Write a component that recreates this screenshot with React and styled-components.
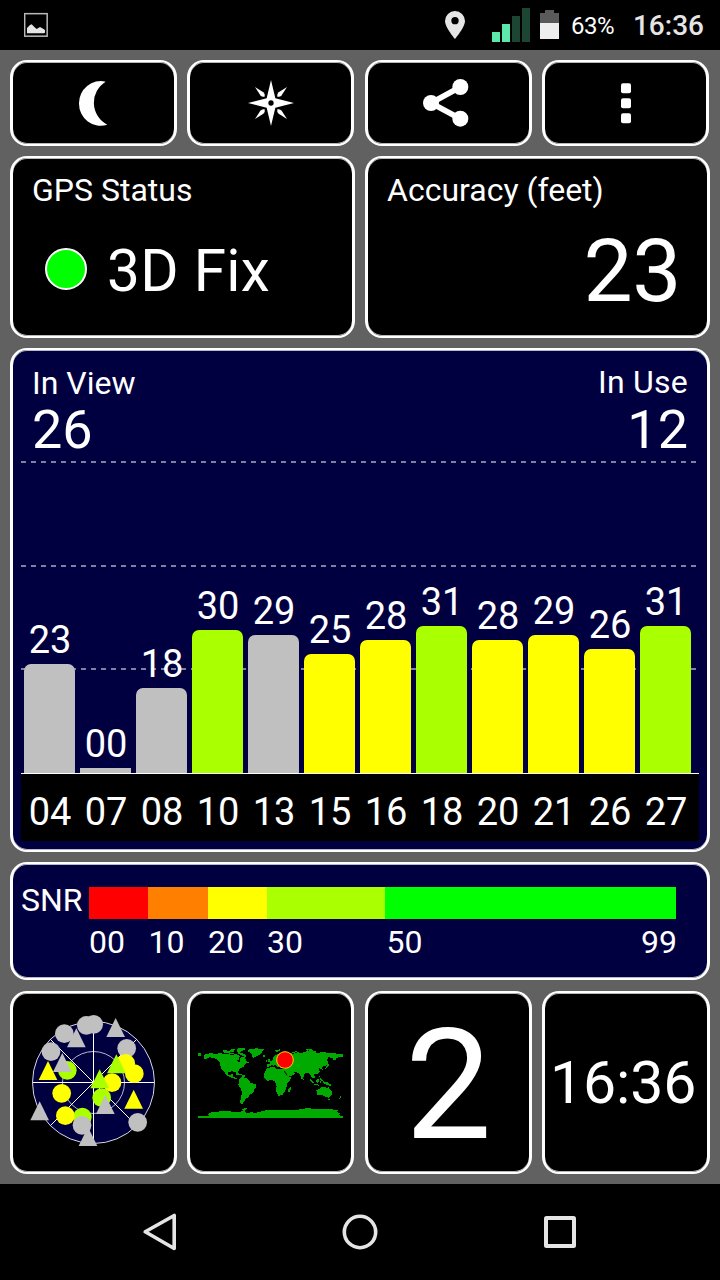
import React from 'react'
import styled, { createGlobalStyle } from 'styled-components'

const GlobalStyle = createGlobalStyle`
    * {
        box-sizing: border-box;
    }
    body {
        margin: 0;
        background-color: #000;
        color: #fff;
        font-family: Roboto, "Liberation Sans", sans-serif;
    }
    svg {
        display: block;
        flex-shrink: 0;
    }
`
const Screen = styled.div`
    width: 720px;
    height: 1280px;
    display: flex;
    flex-direction: column;
    overflow: hidden;
    background-color: #000;
`
const StatusBar = styled.header`
    height: 50px;
    display: flex;
    align-items: center;
    padding: 0 16px 0 24px;
`
const Battery = styled.span`
    width: 44px;
    margin: 2px 18px 0 12px;
    font-size: 24px;
    line-height: 30px;
    letter-spacing: -0.5px;
`
const StatusTime = styled.span`
    margin-top: 2px;
    font-size: 28px;
    font-weight: 500;
    line-height: 34px;
    color: #e5e5e5;
`
const Spacer = styled.div`
    flex: 1;
`
const Content = styled.main`
    height: 1134px;
    display: flex;
    flex-direction: column;
    gap: 10px;
    padding: 10px 10px 0;
    background-color: #616161;
`
const Panel = styled.section`
    border: solid #fff;
    border-width: 2px 3px;
    border-radius: 17px;
    box-shadow: inset 0 1px 0 rgba(255, 255, 255, 0.72), inset 0 -1px 0 rgba(255, 255, 255, 0.72);
    background-color: ${(prop) => prop.navy ? '#000040' : '#000'};
`
const Row = styled.div`
    display: grid;
    grid-template-columns: ${(prop) => prop.half ? '345px 345px' : '167px 168px 167px 168px'};
    column-gap: 10px;
    height: ${(prop) => prop.height}px;
    margin-top: ${(prop) => prop.top || 0}px;
    & > ${Panel}:nth-child(2) {
        margin-right: ${(prop) => prop.half ? 0 : 1}px;
    }
`
const IconButton = styled(Panel).attrs({ as: 'button' })`
    width: 167px;
    display: flex;
    align-items: center;
    justify-content: center;
    padding: 0;
`
const InfoPanel = styled(Panel)`
    padding: 13px 27px 0 19px;
`
const Label = styled.div`
    font-size: 32px;
    line-height: 38px;
`
const FixRow = styled.div`
    display: flex;
    align-items: center;
    margin: 28px 0 0 13px;
    font-size: 58.5px;
    line-height: 68px;
    letter-spacing: 0.3px;
`
const FixDot = styled.div`
    width: 42px;
    height: 42px;
    margin: 0 20px 4px 0;
    border: 2px solid #fff;
    border-radius: 50%;
    background-color: #00ff00;
`
const Accuracy = styled.div`
    margin: 12px -1px 0 0;
    font-size: 87.5px;
    line-height: 100px;
    letter-spacing: -0.4px;
    text-align: right;
`
const ChartPanel = styled(Panel)`
    height: 504px;
    padding: 0 8px;
`
const ChartHeader = styled.div`
    height: 111px;
    display: flex;
    justify-content: space-between;
    padding: 16px 11px 0 11px;
`
const Counter = styled.div`
    text-align: ${(prop) => prop.right ? 'right' : 'left'};
`
const CounterName = styled.div`
    margin-top: ${(prop) => prop.up ? -1 : 0}px;
    margin-bottom: ${(prop) => prop.up ? 1 : 0}px;
    font-size: 32px;
    line-height: 34px;
    letter-spacing: ${(prop) => prop.up ? 0.25 : 0}px;
`
const CounterValue = styled.div`
    font-size: 54px;
    line-height: 60px;
`
const Plot = styled.div`
    position: relative;
    height: 312px;
    display: flex;
    align-items: flex-end;
    gap: 5px;
    padding-left: 3px;
`
const GridLine = styled.div`
    position: absolute;
    left: 0;
    top: ${(prop) => prop.top}px;
    width: 675px;
    height: 2px;
    background: repeating-linear-gradient(90deg, #8080a0 0 5px, transparent 5px 10px);
`
const Column = styled.div`
    position: relative;
    width: 51px;
    text-align: center;
`
const BarValue = styled.div`
    margin: 0 -6px 4px -5px;
    font-size: 38px;
    line-height: 40px;
`
const Bar = styled.div`
    border-radius: ${(prop) => prop.empty ? 0 : '7px 7px 0 0'};
    background-color: ${(prop) => prop.color};
`
const Axis = styled.div`
    width: 678px;
    height: 68px;
    display: flex;
    gap: 5px;
    padding: 9px 0 0 3.5px;
    border-top: 1px solid #fff;
    background-color: #000;
`
const AxisLabel = styled.div`
    width: 51px;
    font-size: 38px;
    line-height: 58px;
    text-align: center;
`
const SnrPanel = styled(Panel)`
    height: 118px;
    display: flex;
    padding: 23px 0 0 8px;
`
const SnrName = styled.div`
    width: 68px;
    margin-top: -6px;
    font-size: 32px;
    line-height: 38px;
`
const Scale = styled.div`
    width: 587px;
    display: grid;
    grid-template-columns: 59.4px 59.6px 59px 118px 291px;
    grid-template-rows: 32px 44px;
`
const Segment = styled.div`
    background-color: ${(prop) => prop.color};
`
const Tick = styled.div`
    display: flex;
    justify-content: space-between;
    margin-right: -1px;
    padding: 4px 0 0 ${(prop) => prop.indent || 0}px;
    font-size: 32px;
    line-height: 38px;
`
const Tile = styled(Panel)`
    display: flex;
    align-items: center;
    justify-content: center;
    overflow: hidden;
`
const BigDigit = styled.div`
    margin-top: 6px;
    font-size: 154.5px;
    line-height: 180px;
`
const Clock = styled.div`
    width: 144px;
    margin-right: 8px;
    overflow: hidden;
    font-size: 59px;
    line-height: 70px;
    letter-spacing: -0.1px;
    white-space: nowrap;
`
const NavBar = styled.nav`
    height: 96px;
    display: grid;
    grid-template-columns: repeat(3, 200px);
    justify-content: center;
    align-items: center;
    justify-items: center;
`

const LIME = '#aaff00'
const YELLOW = '#ffff00'
const GREY = '#c0c0c0'

const satellites = [
    { id: '04', snr: '23', height: 109, color: GREY },
    { id: '07', snr: '00', height: 5, color: GREY },
    { id: '08', snr: '18', height: 85, color: GREY },
    { id: '10', snr: '30', height: 143, color: LIME },
    { id: '13', snr: '29', height: 138, color: GREY },
    { id: '15', snr: '25', height: 119, color: YELLOW },
    { id: '16', snr: '28', height: 133, color: YELLOW },
    { id: '18', snr: '31', height: 147, color: LIME },
    { id: '20', snr: '28', height: 133, color: YELLOW },
    { id: '21', snr: '29', height: 138, color: YELLOW },
    { id: '26', snr: '26', height: 124, color: YELLOW },
    { id: '27', snr: '31', height: 147, color: LIME },
]

// c = circle, t = triangle, drawn in this order
const sky = [
    ['c', 259, 121, GREY],
    ['c', 281, 118, GREY],
    ['c', 193, 146, GREY],
    ['t', 229, 160, GREY],
    ['c', 153, 200, GREY],
    ['t', 347, 129, GREY],
    ['c', 380, 190, GREY],
    ['c', 202, 256, LIME],
    ['t', 187, 234, GREY],
    ['t', 144, 258, YELLOW],
    ['c', 377, 235, YELLOW],
    ['t', 349, 238, LIME],
    ['c', 403, 266, YELLOW],
    ['c', 305, 338, LIME],
    ['c', 336, 293, YELLOW],
    ['t', 299, 283, LIME],
    ['t', 316, 360, GREY],
    ['t', 401, 344, YELLOW],
    ['c', 185, 325, YELLOW],
    ['t', 119, 379, GREY],
    ['c', 247, 396, LIME],
    ['c', 196, 392, YELLOW],
    ['t', 264, 456, GREY],
    ['c', 246, 421, GREY],
    ['c', 413, 412, GREY],
]

const PictureIcon = () => (
    <svg width="24" height="50" viewBox="72 0 72 150">
        <rect x="74" y="41" width="67.500" height="67.500" fill="none" stroke="#b8bab6" strokeWidth="4.500" />
        <path d="M81 100V84L90 75L95 73L103 81L110 87L120 81L132 88L135 91V98L131 100Z" fill="#e5e5e5" />
    </svg>
)

const PinIcon = () => (
    <svg width="20" height="50" viewBox="255 0 60 150">
        <path
            d="M285 33A30 30 0 0 0 255 63C255 82 285 117 285 117S315 82 315 63A30 30 0 0 0 285 33ZM285 73A11 11 0 1 1 285 51A11 11 0 1 1 285 73Z"
            fill="#e5e5e5"
        />
    </svg>
)

const Signal = styled.svg`
    margin: 0 10px 0 27px;
`

const SignalIcon = () => (
    <Signal width="38" height="50" viewBox="0 0 38 50">
        <path d="M0 32H8V42H0ZM10 24H18V42H10Z" fill="#5ce8ab" />
        <path d="M20 16H28V42H20ZM30 8H38V42H30Z" fill="#1c4533" />
    </Signal>
)

const BatteryIcon = () => (
    <svg width="19" height="50" viewBox="0 0 19 50">
        <path d="M0 13H5V10H14V13H19V23H0Z" fill="#5a5a5a" />
        <path d="M0 23H19V39H0Z" fill="#eee" />
    </svg>
)

const MoonIcon = () => (
    <svg width="51" height="50" viewBox="204 234 153 150">
        <path d="M317 245A65 66 0 0 0 237 310A65 66 0 0 0 322 374A74 74 0 0 1 317 245Z" fill="#fff" />
    </svg>
)

const CompassIcon = () => (
    <svg width="51" height="50" viewBox="-78 -75 153 150">
        <path d="M0 -69L13 -14L69 0L13 14L0 69L-13 14L-69 0L-13 -14Z" fill="#fff" />
        {[0, 90, 180, 270].map((angle) => (
            <path
                key={angle}
                d="M-48 -48L-23 -32Q-17 -27 -19 -19Q-27 -17 -32 -23Z"
                transform={`rotate(${angle})`}
                fill="#fff"
            />
        ))}
        <circle r="8" fill="#000" />
    </svg>
)

const ShareIcon = () => (
    <svg width="51" height="50" viewBox="189 234 153 150" overflow="visible">
        <path d="M301 261L213 309L301 356" fill="none" stroke="#fff" strokeWidth="17" />
        <circle cx="213" cy="309" r="24" fill="#fff" />
        <circle cx="301" cy="261" r="24" fill="#fff" />
        <circle cx="301" cy="356" r="24" fill="#fff" />
    </svg>
)

const MenuIcon = () => (
    <svg width="51" height="50" viewBox="720 234 153 150">
        <rect x="783" y="250" width="30" height="30" rx="6" fill="#fff" />
        <rect x="783" y="295" width="30" height="30" rx="6" fill="#fff" />
        <rect x="783" y="340" width="30" height="30" rx="6" fill="#fff" />
    </svg>
)

const SkyPlot = () => (
    <svg width="151" height="151" viewBox="54 66 453 453" overflow="visible">
        <circle cx="280.500" cy="292.500" r="183" fill="#000040" stroke="#d8d8e4" strokeWidth="3" />
        <circle cx="280.500" cy="292.500" r="93" fill="none" stroke="#b8b8cc" strokeWidth="3" />
        <path
            d="M280.500 110V475M98 292.500H463M151 163L410 422M410 163L151 422"
            fill="none"
            stroke="#fff"
            strokeWidth="3"
        />
        {sky.map(([shape, x, y, color], i) => (
            shape === 'c'
                ? <circle key={i} cx={x} cy={y} r="28" fill={color} />
                : <path key={i} d={`M${x} ${y - 30}L${x + 28} ${y + 27}H${x - 28}Z`} fill={color} />
        ))}
    </svg>
)

const WorldMap = () => (
    <svg width="145" height="70" viewBox="39 54 435 210" overflow="visible">
        <g fill="#00aa00" shapeRendering="crispEdges">
            {/* north america and the arctic islands */}
            <path d="M39 69H48V78H39ZM57 85L56 80L62 71L80 70L108 73L130 71L140 75L154 72L164 78L163 88L154 90L162 98L166 94V86L172 80L180 82L184 92L192 98L180 102L176 110L166 114L162 120L158 125V134L154 134L151 126L140 124L130 126L128 133L136 137L140 131L144 132L143 139L152 143L158 148L150 147L136 141L124 135L116 124L108 116L106 104L104 96L96 88L84 83L74 82L62 88Z" />
            <path d="M112 62L124 60L130 66L120 70ZM134 59L150 57L146 66L136 66ZM132 68H146V72H134ZM154 56L176 54L184 57L170 64L158 66ZM158 67L172 68L182 76L186 82L180 82L170 76L160 72ZM126 64H134V68H126ZM100 70H112V73H100Z" />
            <path d="M188 64L194 58L212 55L238 57L232 64L230 70L224 75L214 78L206 84L201 80L200 72L194 66Z" />
            <path d="M234 75H241V80H234ZM150 128L162 130L172 134V137L160 134ZM172 136H180V140H172Z" />
            {/* south america */}
            <path d="M162 150L170 141L184 144L194 152L196 158L214 164L214 170L207 178L205 188L195 194L190 202L182 207L177 215L174 220L178 222L170 222L165 217L168 204L171 186L167 176L160 165Z" />
            {/* africa */}
            <path d="M248 114L268 110L274 116L290 116L300 118L305 130L312 140L320 141L315 151L306 160L304 174L299 186L292 195L280 198L275 188L272 178L275 168L270 154L262 150L248 152L240 146L236 137L240 124Z" />
            <path d="M312 174L319 169L316 184L310 187L309 179Z" />
            {/* europe and asia */}
            <path d="M246 110L246 102L256 101L253 96L262 92L266 88L264 82L274 74L284 69L296 67L326 71L340 66L342 70L352 68L360 66L364 63L378 60L392 64L394 68L420 67L444 70L474 72V80L460 81L454 85L450 92L444 90L446 84L430 82L426 92L430 98L420 109L410 110L414 119L408 118L402 114L404 126L396 132L386 134L390 142L384 146L378 140L376 134L370 130L366 128L358 132L354 146L349 147L345 134L338 128L326 124L330 130L324 136L312 140L300 124V115L286 113L284 107L280 112L270 104L266 103L270 110L260 104L256 109Z" />
            <path d="M249 86H254V96L248 98ZM244 91H247V95H244ZM270 61L284 58L286 62L276 66ZM320 67L334 63L336 66L324 70ZM364 58L380 56V60L366 62ZM428 100L433 104L426 114L420 118L424 110ZM402 136L408 146L414 153L408 152L404 144ZM353 146H356V150H353Z" />
            {/* indonesia and oceania */}
            <path d="M372 146L380 150L388 160L384 160L376 152ZM388 162L402 164V167L388 165ZM392 150L402 145L400 158L393 157ZM404 152H409V160H404ZM414 154L428 157L438 164L438 168L424 164L414 158Z" />
            <path d="M394 180L406 175L412 170L422 172L426 176L430 169L434 178L441 186L440 195L432 203L420 200L412 194L398 197ZM428 206H434V210H428ZM466 198L470 202L462 209L458 212L464 204Z" />
            {/* antarctica */}
            <path d="M39 264V257H72L68 252L78 248V245L130 244L164 246L174 242L172 238L184 232L186 235L178 242L182 248L196 250V247L214 248L236 242L270 239L330 240L346 238L370 234L388 238L440 238L462 242L452 246L466 249L460 256L474 258V264Z" />
        </g>
        <path d="M298 123L306 136" stroke="#000" strokeWidth="3" />
        <circle cx="300" cy="90" r="25" fill="#ff0000" stroke="#ffd000" strokeWidth="3" />
    </svg>
)

const App = () => {
  return (
    <Screen>
        <GlobalStyle/>
        <StatusBar>
            <PictureIcon/>
            <Spacer/>
            <PinIcon/>
            <SignalIcon/>
            <BatteryIcon/>
            <Battery>63%</Battery>
            <StatusTime>16:36</StatusTime>
        </StatusBar>
        <Content>
            <Row height={86}>
                <IconButton><MoonIcon/></IconButton>
                <IconButton><CompassIcon/></IconButton>
                <IconButton><ShareIcon/></IconButton>
                <IconButton><MenuIcon/></IconButton>
            </Row>
            <Row half height={182}>
                <InfoPanel>
                    <Label>GPS Status</Label>
                    <FixRow><FixDot/>3D Fix</FixRow>
                </InfoPanel>
                <InfoPanel>
                    <Label>Accuracy (feet)</Label>
                    <Accuracy>23</Accuracy>
                </InfoPanel>
            </Row>
            <ChartPanel navy>
                <ChartHeader>
                    <Counter>
                        <CounterName>In View</CounterName>
                        <CounterValue>26</CounterValue>
                    </Counter>
                    <Counter right>
                        <CounterName up>In Use</CounterName>
                        <CounterValue>12</CounterValue>
                    </Counter>
                </ChartHeader>
                <Plot>
                    <GridLine top={0}/>
                    <GridLine top={104}/>
                    <GridLine top={207}/>
                    {satellites.map((sat) => (
                        <Column key={sat.id}>
                            <BarValue>{sat.snr}</BarValue>
                            <Bar color={sat.color} empty={sat.snr === '00'} style={{ height: sat.height }}/>
                        </Column>
                    ))}
                </Plot>
                <Axis>
                    {satellites.map((sat) => <AxisLabel key={sat.id}>{sat.id}</AxisLabel>)}
                </Axis>
            </ChartPanel>
            <SnrPanel navy>
                <SnrName>SNR</SnrName>
                <Scale>
                    <Segment color="#ff0000"/>
                    <Segment color="#ff8000"/>
                    <Segment color={YELLOW}/>
                    <Segment color={LIME}/>
                    <Segment color="#00ff00"/>
                    <Tick>00</Tick>
                    <Tick>10</Tick>
                    <Tick>20</Tick>
                    <Tick>30</Tick>
                    <Tick indent={1.5}><span>50</span><span>99</span></Tick>
                </Scale>
            </SnrPanel>
            <Row height={183} top={1}>
                <Tile><SkyPlot/></Tile>
                <Tile><WorldMap/></Tile>
                <Tile><BigDigit>2</BigDigit></Tile>
                <Tile><Clock>16:36</Clock></Tile>
            </Row>
        </Content>
        <NavBar>
            <svg width="40" height="40" viewBox="140 1212 40 40" fill="none" stroke="#e5e5e5" strokeWidth="3.600">
                <path d="M145.200 1231.800L174.200 1215.500V1248.500Z" strokeLinejoin="round" />
            </svg>
            <svg width="40" height="40" viewBox="0 0 40 40" fill="none" stroke="#e5e5e5" strokeWidth="3.600">
                <circle cx="20" cy="20" r="15.700" />
            </svg>
            <svg width="40" height="40" viewBox="0 0 40 40" fill="none" stroke="#e5e5e5" strokeWidth="4">
                <rect x="6" y="6" width="28" height="28" rx="0.500" strokeLinejoin="round" />
            </svg>
        </NavBar>
    </Screen>
  )
}

export default App
